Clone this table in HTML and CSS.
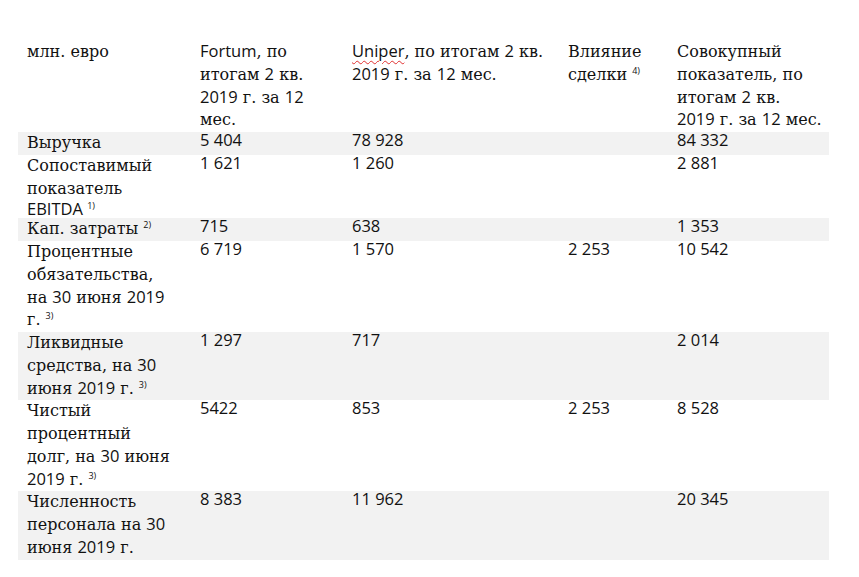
FILE: index.html
```html
<!DOCTYPE html>
<html lang="ru">
<head>
<meta charset="utf-8">
<title>Fortum + Uniper</title>
<link rel="stylesheet" href="styles.css">
</head>
<body>
<table class="fin">
  <colgroup>
    <col class="c1"><col class="c2"><col class="c3"><col class="c4"><col class="c5">
  </colgroup>
  <thead>
    <tr>
      <th>млн. евро</th>
      <th><span class="s">Fortum</span>, по<br>итогам <span class="s">2</span> кв.<br><span class="s">2019</span> г. за <span class="s">12</span><br>мес.</th>
      <th><span class="s spell">Uniper</span>, по итогам <span class="s">2</span> кв.<br><span class="s">2019</span> г. за <span class="s">12</span> мес.</th>
      <th>Влияние<br>сделки <sup class="fn">4)</sup></th>
      <th>Совокупный<br>показатель, по<br>итогам <span class="s">2</span> кв.<br><span class="s">2019</span> г. за <span class="s">12</span> мес.</th>
    </tr>
  </thead>
  <tbody>
    <tr class="shade">
      <td>Выручка</td>
      <td class="num">5 404</td>
      <td class="num">78 928</td>
      <td class="num"></td>
      <td class="num">84 332</td>
    </tr>
    <tr>
      <td>Сопоставимый<br>показатель<span class="short">EBITDA <sup class="fn">1)</sup></span></td>
      <td class="num">1 621</td>
      <td class="num">1 260</td>
      <td class="num"></td>
      <td class="num">2 881</td>
    </tr>
    <tr class="shade">
      <td>Кап. затраты <sup class="fn">2)</sup></td>
      <td class="num">715</td>
      <td class="num">638</td>
      <td class="num"></td>
      <td class="num">1 353</td>
    </tr>
    <tr>
      <td>Процентные<br>обязательства,<br>на <span class="s">30</span> июня <span class="s">2019</span><br>г. <sup class="fn">3)</sup></td>
      <td class="num">6 719</td>
      <td class="num">1 570</td>
      <td class="num">2 253</td>
      <td class="num">10 542</td>
    </tr>
    <tr class="shade">
      <td>Ликвидные<br>средства, на <span class="s">30</span><br>июня <span class="s">2019</span> г. <sup class="fn">3)</sup></td>
      <td class="num">1 297</td>
      <td class="num">717</td>
      <td class="num"></td>
      <td class="num">2 014</td>
    </tr>
    <tr>
      <td>Чистый<br>процентный<br>долг, на <span class="s">30</span> июня<br><span class="s">2019</span> г. <sup class="fn">3)</sup></td>
      <td class="num">5422</td>
      <td class="num">853</td>
      <td class="num">2 253</td>
      <td class="num">8 528</td>
    </tr>
    <tr class="shade">
      <td>Численность<br>персонала на <span class="s">30</span><br>июня <span class="s">2019</span> г.</td>
      <td class="num">8 383</td>
      <td class="num">11 962</td>
      <td class="num"></td>
      <td class="num">20 345</td>
    </tr>
  </tbody>
</table>
</body>
</html>
```

FILE: styles.css
```css
html, body {
  margin: 0;
  padding: 0;
  background: #ffffff;
}

body {
  color: #111111;
  font-family: "DejaVu Serif", serif;
  font-size: 16px;
}

.fin {
  border-collapse: collapse;
  border-spacing: 0;
  table-layout: fixed;
  width: 811px;
  margin: 41px 0 0 18px;
}

.c1 { width: 173px; }
.c2 { width: 152px; }
.c3 { width: 216px; }
.c4 { width: 109px; }
.c5 { width: 161px; }

.fin th,
.fin td {
  text-align: left;
  font-weight: normal;
  vertical-align: top;
  padding: 0 0 0 9px;
  line-height: 22.75px;
  white-space: nowrap;
}

.shade td {
  background: #f2f2f2;
}

.s {
  font-family: "Open Sans", "Liberation Sans", sans-serif;
  font-weight: 400;
  font-size: 16.5px;
  line-height: 1;
}

.fin td.num {
  font-family: "Open Sans", "Liberation Sans", sans-serif;
  font-weight: 400;
  font-size: 16.5px;
  line-height: 16px;
  color: #111111;
}

.fn {
  font-family: "Open Sans", "Liberation Sans", sans-serif;
  font-size: 9px;
  line-height: 0;
  vertical-align: 6px;
}

.short {
  display: block;
  font-family: "Open Sans", "Liberation Sans", sans-serif;
  font-size: 16.5px;
  line-height: 18px;
}

.spell {
  text-decoration: underline wavy #e03030;
  text-decoration-thickness: 1px;
  text-underline-offset: 3px;
}
```
